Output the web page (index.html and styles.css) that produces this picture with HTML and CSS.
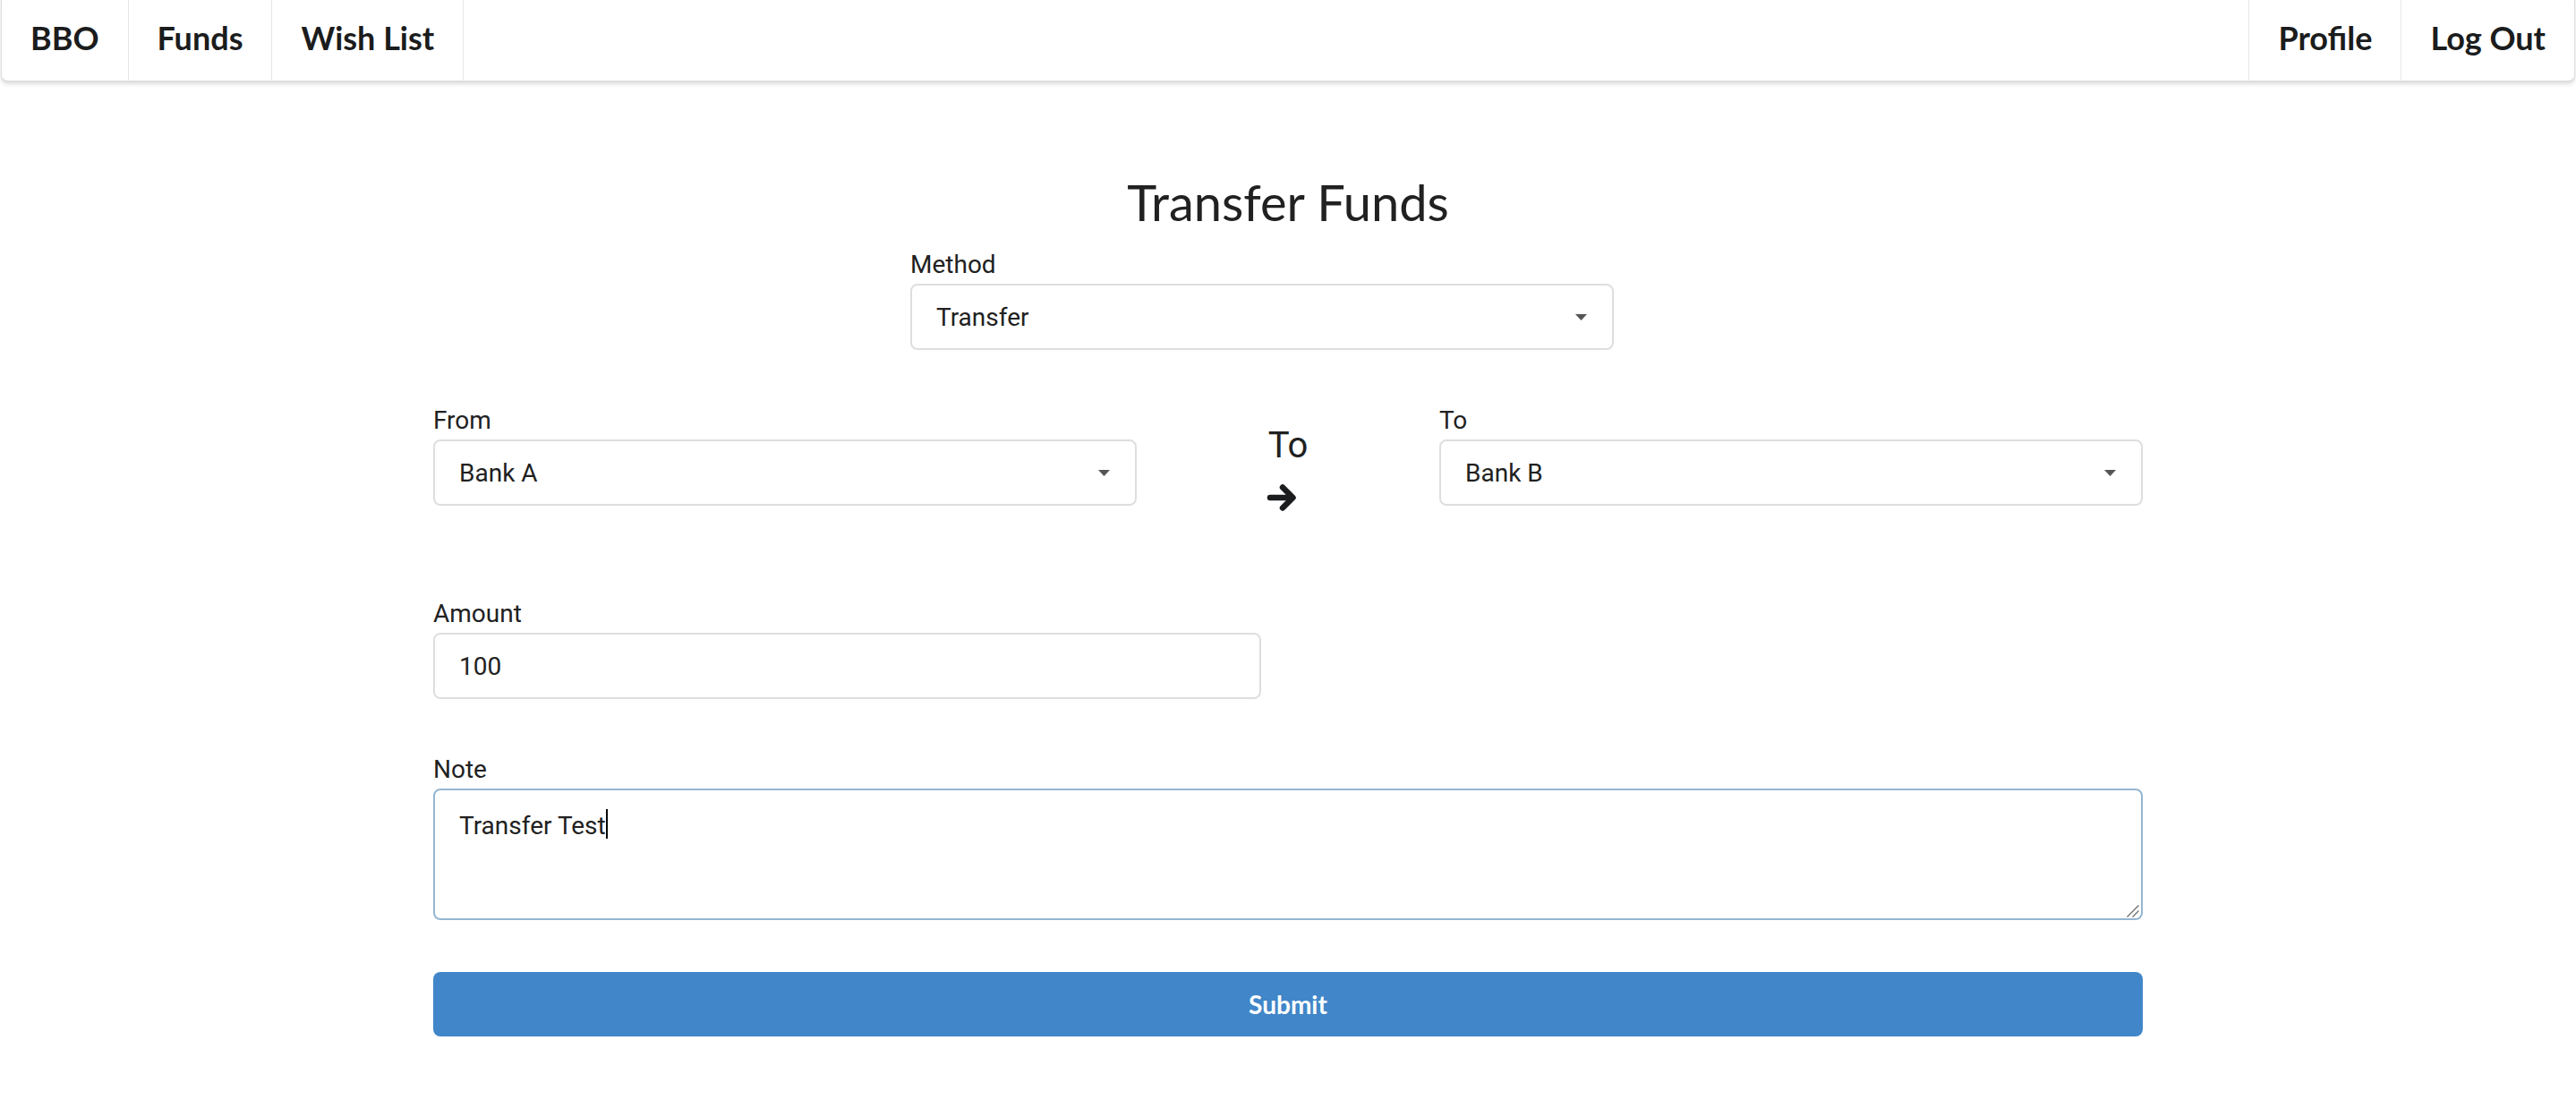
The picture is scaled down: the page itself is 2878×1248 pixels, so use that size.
FILE: index.html
```html
<!DOCTYPE html>
<html lang="en">
<head>
<meta charset="utf-8">
<title>Transfer Funds</title>
<link rel="stylesheet" href="styles.css">
</head>
<body>
<nav class="menu">
  <a class="item item-left" href="#">BBO</a>
  <a class="item item-left" href="#">Funds</a>
  <a class="item item-left" href="#">Wish List</a>
  <div class="menu-right">
    <a class="item item-right" href="#">Profile</a>
    <a class="item item-right" href="#">Log Out</a>
  </div>
</nav>

<main class="page">
  <h1 class="title">Transfer Funds</h1>

  <div class="field field-method">
    <label class="label">Method</label>
    <div class="dropdown">
      <span class="value">Transfer</span>
      <svg class="caret" width="13" height="7" viewBox="0 0 13 7"><polygon points="0,0 13,0 6.5,7" fill="#555"/></svg>
    </div>
  </div>

  <div class="row">
    <div class="field">
      <label class="label">From</label>
      <div class="dropdown">
        <span class="value">Bank A</span>
        <svg class="caret" width="13" height="7" viewBox="0 0 13 7"><polygon points="0,0 13,0 6.5,7" fill="#555"/></svg>
      </div>
    </div>
    <div class="middle">
      <div class="middle-inner">
        <span class="to-text">To</span>
        <svg class="arrow" width="34" height="32" viewBox="0 0 34 32">
          <path d="M4 16 H29 M18 4.5 L29.5 16 L18 27.5" fill="none" stroke="#1b1c1d" stroke-width="6.5" stroke-linecap="round" stroke-linejoin="round"/>
        </svg>
      </div>
    </div>
    <div class="field">
      <label class="label">To</label>
      <div class="dropdown">
        <span class="value">Bank B</span>
        <svg class="caret" width="13" height="7" viewBox="0 0 13 7"><polygon points="0,0 13,0 6.5,7" fill="#555"/></svg>
      </div>
    </div>
  </div>

  <div class="field field-amount">
    <label class="label">Amount</label>
    <div class="input">100</div>
  </div>

  <div class="field field-note">
    <label class="label">Note</label>
    <div class="textarea">Transfer Test<span class="text-caret"></span>
      <svg class="grip" width="16" height="16" viewBox="0 0 16 16">
        <path d="M14.5 1.5 L1.5 14.5 M14.5 7.5 L7.5 14.5" stroke="#6b6b6b" stroke-width="1.3" fill="none"/>
      </svg>
    </div>
  </div>

  <button class="submit" type="button">Submit</button>
</main>
</body>
</html>
```

FILE: styles.css
```css
* { box-sizing: border-box; }

body {
  margin: 0;
  background: #ffffff;
  color: #212121;
  font-family: Roboto, "Liberation Sans", Arial, sans-serif;
  font-size: 28px;
}

/* Top menu */
.menu {
  display: flex;
  margin: -1px 1px 0 1px;
  border: 1px solid rgba(34, 36, 38, 0.15);
  border-bottom-width: 2px;
  border-radius: 0 0 8px 8px;
  box-shadow: 0 2px 4px 0 rgba(34, 36, 38, 0.15);
  background: #fff;
}

.item {
  display: block;
  font-family: Lato, "Open Sans", sans-serif;
  font-weight: 700;
  font-size: 36px;
  line-height: 36px;
  padding: 24px 32px 30px;
  color: #1b1c1d;
  text-decoration: none;
}

.item-left { border-right: 1px solid #e6e6e6; }
.item-right { border-left: 1px solid #e6e6e6; }

.menu-right {
  display: flex;
  margin-left: auto;
}

/* Page */
.page {
  width: 1910px;
  margin: 0 auto;
  padding-bottom: 60px;
}

.title {
  margin: 98px 0 0;
  font-family: Lato, "Open Sans", sans-serif;
  font-weight: 400;
  font-size: 56px;
  line-height: 72px;
  text-align: center;
  color: #212121;
}

.field { display: flex; flex-direction: column; }

.label {
  display: block;
  font-size: 28px;
  line-height: 32px;
  margin-bottom: 5px;
  color: #212121;
}

.field-method {
  margin-top: 18px;
  margin-left: 533px;
  width: 786px;
}

.dropdown,
.input {
  height: 74px;
  border: 2px solid #dedede;
  border-radius: 8px;
  padding: 0 28px 0 27px;
  display: flex;
  align-items: center;
  justify-content: space-between;
  font-size: 28px;
  color: #212121;
  background: #fff;
}

.caret { display: block; }

.row {
  display: grid;
  grid-template-columns: 786px 1fr 786px;
  align-items: start;
  margin-top: 63px;
}

.middle {
  display: flex;
  justify-content: center;
  padding-top: 20px;
}

.middle-inner {
  display: flex;
  flex-direction: column;
  align-items: flex-start;
}

.to-text {
  font-size: 40px;
  line-height: 48px;
  color: #212121;
}

.arrow {
  display: block;
  margin-top: 18px;
  margin-left: -2px;
}

.field-amount {
  margin-top: 98px;
  width: 925px;
}

.field-note { margin-top: 63px; }

.textarea {
  position: relative;
  height: 147px;
  border: 2px solid #95b6d1;
  border-radius: 8px;
  padding: 21px 27px;
  font-size: 28px;
  line-height: 36px;
  color: #212121;
}

.text-caret {
  display: inline-block;
  width: 2px;
  height: 33px;
  background: #000;
  vertical-align: -5px;
}

.grip {
  position: absolute;
  right: 1px;
  bottom: 0;
}

.submit {
  display: flex;
  align-items: center;
  justify-content: center;
  width: 100%;
  height: 72px;
  margin-top: 58px;
  border: none;
  border-radius: 8px;
  background: #4086c8;
  color: #fff;
  font-family: Lato, "Open Sans", sans-serif;
  font-weight: 700;
  font-size: 28px;
  cursor: pointer;
}
```
